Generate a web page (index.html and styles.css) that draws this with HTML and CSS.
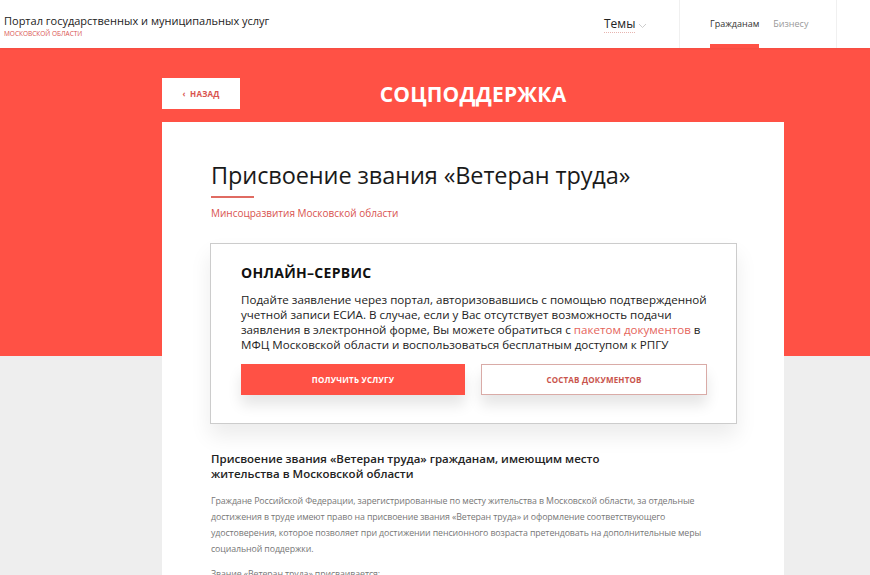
FILE: index.html
```html
<!DOCTYPE html>
<html lang="ru">
<head>
  <meta charset="UTF-8" />
  <meta name="viewport" content="width=device-width, initial-scale=1.0" />
  <title>Присвоение звания «Ветеран труда»</title>
  <link rel="stylesheet" href="styles.css">
</head>
<body>

  <header class="topbar">
    <div class="brand">
      <div class="brand-name">Портал государственных и муниципальных услуг</div>
      <div class="brand-region">МОСКОВСКОЙ ОБЛАСТИ</div>
    </div>
    <div class="topics">
      <span class="topics-label">Темы</span>
      <svg width="9" height="6" viewBox="0 0 9 6"><path d="M1 1l3.5 3.5L8 1" fill="none" stroke="#ccc" stroke-width="1"/></svg>
    </div>
    <nav class="audience">
      <a class="active">Гражданам</a>
      <a>Бизнесу</a>
    </nav>
    <div class="topbar-end"></div>
  </header>

  <main class="page">
    <div class="crumbs">
      <a class="back">&lsaquo;&nbsp; НАЗАД</a>
      <h1 class="section">СОЦПОДДЕРЖКА</h1>
    </div>

    <article class="card">
      <h2 class="title">Присвоение звания «Ветеран труда»</h2>
      <div class="title-line"></div>
      <div class="agency">Минсоцразвития Московской области</div>

      <section class="online">
        <h3>ОНЛАЙН–СЕРВИС</h3>
        <p>Подайте заявление через портал, авторизовавшись с помощью подтвержденной учетной записи ЕСИА. В случае, если у Вас отсутствует возможность подачи заявления в электронной форме, Вы можете обратиться с <a>пакетом документов</a> в МФЦ Московской области и воспользоваться бесплатным доступом к РПГУ</p>
        <div class="actions">
          <button class="btn primary">ПОЛУЧИТЬ УСЛУГУ</button>
          <button class="btn outline">СОСТАВ ДОКУМЕНТОВ</button>
        </div>
      </section>

      <h4 class="subtitle">Присвоение звания «Ветеран труда» гражданам, имеющим место жительства в Московской области</h4>
      <p class="text">Граждане Российской Федерации, зарегистрированные по месту жительства в Московской области, за отдельные достижения в труде имеют право на присвоение звания «Ветеран труда» и оформление соответствующего удостоверения, которое позволяет при достижении пенсионного возраста претендовать на дополнительные меры социальной поддержки.</p>
      <p class="text">Звание «Ветеран труда» присваивается:</p>
    </article>
  </main>

</body>
</html>
```

FILE: styles.css
```css
* { box-sizing: border-box; }
body { margin: 0; font-family: "Open Sans", "Noto Sans", sans-serif; color: #222; background: #eee; overflow: hidden; }
a { cursor: pointer; }

.topbar { display: flex; height: 48px; background: #fff; box-shadow: 0 1px 2px rgba(0,0,0,0.05); position: relative; z-index: 1; }
.brand { padding: 12px 0 0 4px; width: 600px; }
.brand-name { font-size: 11px; line-height: 17px; color: #222; }
.brand-region { font-size: 6.5px; color: #d9534f; margin-top: 0; }
.topics { width: 79px; padding-top: 15px; padding-left: 4px; display: flex; align-items: flex-start; gap: 3px; }
.topics-label { font-size: 12px; line-height: 17px; border-bottom: 1px dotted #e7b4af; }
.topics svg { margin-top: 8px; }
.audience { display: flex; gap: 14px; width: 158px; padding-left: 30px; border-left: 1px solid #f0f0f0; border-right: 1px solid #f0f0f0; }
.audience a { font-size: 9px; color: #999; padding-top: 17px; height: 48px; }
.audience a.active { color: #333; border-bottom: 4px solid #ff5145; }
.topbar-end { flex: 1; }

.page { background: linear-gradient(#ff5145 0, #ff5145 308px, #eee 308px); padding-top: 30px; height: 527px; }
.crumbs { display: grid; grid-template-columns: 78px 1fr 78px; align-items: center; width: 622px; margin-left: 162px; height: 31px; }
.back { background: #fff; height: 31px; display: flex; align-items: center; justify-content: center; font-size: 8px; font-weight: 700; color: #d9534f; letter-spacing: 0.2px; }
.section { margin: 0; text-align: center; color: #fff; font-size: 21px; font-weight: 700; letter-spacing: 0.2px; }

.card { background: #fff; width: 622px; margin: 13px 0 0 162px; padding: 38px 47px 0 49px; height: 460px; }
.title { margin: 0; font-size: 23.5px; font-weight: 400; line-height: 30px; color: #1a1a1a; letter-spacing: -0.1px; }
.title-line { width: 43px; height: 2px; background: #e06b62; margin-top: 6px; }
.agency { font-size: 10px; color: #d9534f; margin-top: 8px; }

.online { margin: 23px 0 0 -1px; width: 527px; border: 1px solid #ccc; padding: 19px 18px 28px 30px; box-shadow: 0 12px 20px rgba(0,0,0,0.08); }
.online h3 { margin: 0; font-size: 14px; font-weight: 700; letter-spacing: 0.3px; color: #111; }
.online p { margin: 10px 0 0; font-size: 11.6px; line-height: 15px; color: #222; }
.online p a { color: #e5655c; }
.actions { display: grid; grid-template-columns: 224px 226px; gap: 16px; margin-top: 12px; }
.btn { height: 31px; font-family: inherit; font-size: 8px; font-weight: 700; letter-spacing: 0.2px; cursor: pointer; box-shadow: 0 10px 14px rgba(0,0,0,0.1); }
.btn.primary { background: #ff5145; border: none; color: #fff; }
.btn.outline { background: #fff; border: 1px solid #d9aba7; color: #c9544c; }

.subtitle { margin: 27px 0 0; font-size: 11.5px; font-weight: 600; line-height: 15px; color: #222; width: 420px; }
.text { margin: 12px 0 0; font-size: 8.8px; line-height: 16px; color: #777; letter-spacing: -0.1px; max-width: 500px; }
.text + .text { margin-top: 9px; }
```
